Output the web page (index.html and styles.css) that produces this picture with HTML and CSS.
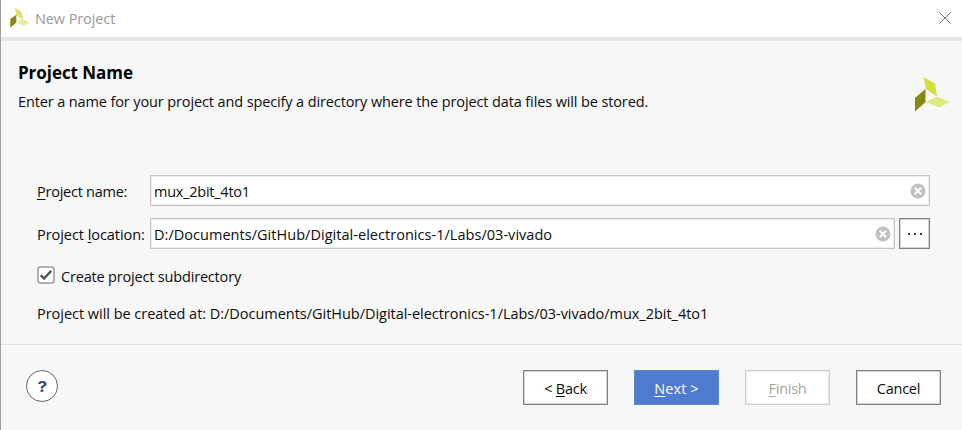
FILE: index.html
```html
<!DOCTYPE html>
<html lang="en">
<head>
<meta charset="utf-8">
<title>New Project</title>
<link rel="stylesheet" href="styles.css">
</head>
<body>
<div class="dialog">
  <header class="titlebar">
    <svg class="logo-small" viewBox="0 0 35 36"><path fill="#d9e36a" d="M8.500 0 20 6.500 23 22 11 13z"/><path fill="#878616" d="M0 20 11 12V26L0 35.500z"/><path fill="#e6eca0" d="M10 26 22 19.500 35 26 24 32.500z"/></svg>
    <span class="window-title">New Project</span>
    <svg class="close" viewBox="0 0 12 12"><path d="M.3.3 11.700 11.700M11.700.3.3 11.700"/></svg>
  </header>
  <section class="intro">
    <div>
      <h1>Project Name</h1>
      <p class="description">Enter a name for your project and specify a directory where the project data files will be stored.</p>
    </div>
    <svg class="logo" viewBox="0 0 35 36"><path fill="#d3e03c" d="M8.500 1 20 7.500 22 20.500 11 13z"/><path fill="#878812" d="M0 22 10.500 13V26L0 35.500z"/><path fill="#e0ea7c" d="M11 26 22 20.500 35 26 24 31.500z"/></svg>
  </section>
  <main class="form">
    <div class="row">
      <label class="name-label"><span><u>P</u>roject name:</span></label>
      <div class="field"><span class="name-value">mux_2bit_4to1</span><svg class="clear" viewBox="0 0 16 16"><circle cx="8" cy="8" r="7.500"/><path d="M4.800 4.800 11.200 11.200M11.200 4.800 4.800 11.200"/></svg></div>
    </div>
    <div class="row">
      <label class="location-label"><span>Project <u>l</u>ocation:</span></label>
      <div class="field"><span class="location-value">D:/Documents/GitHub/Digital-electronics-1/Labs/03-vivado</span><svg class="clear" viewBox="0 0 16 16"><circle cx="8" cy="8" r="7.500"/><path d="M4.800 4.800 11.200 11.200M11.200 4.800 4.800 11.200"/></svg></div>
      <button class="browse" aria-label="Browse"><i></i><i></i><i></i></button>
    </div>
    <div class="check-row">
      <svg class="checkbox" viewBox="0 0 18 18"><rect x="1" y="1" width="16" height="16" rx="2.500"/><path d="M3.800 9.200 7 12.500 14.200 4.800"/></svg>
      <span class="check-label">Create project subdirectory</span>
    </div>
    <p class="result">Project will be created at: D:/Documents/GitHub/Digital-electronics-1/Labs/03-vivado/mux_2bit_4to1</p>
  </main>
  <footer class="footer">
    <button class="help"><span>?</span></button>
    <div class="actions">
      <button class="btn back"><span>&lt; <u>B</u>ack</span></button>
      <button class="btn next"><span><u>N</u>ext &gt;</span></button>
      <button class="btn finish" disabled><span><u>F</u>inish</span></button>
      <button class="btn cancel"><span>Cancel</span></button>
    </div>
  </footer>
</div>
</body>
</html>
```
FILE: styles.css
```css
* { box-sizing: border-box; }
body {
  margin: 0;
  font: 14.5px/20px "Open Sans", "Noto Sans", sans-serif;
  letter-spacing: -0.25px;
  color: #0c0c0c;
}
.dialog {
  height: 430px;
  overflow: hidden;
  display: flex;
  flex-direction: column;
  background: #f7f7f7;
  border-left: 1px solid #a0a0a0;
  white-space: nowrap;
}
h1, p { margin: 0; }
u { text-decoration-thickness: 1px; text-underline-offset: 2px; text-decoration-skip-ink: none; }
button { font: inherit; letter-spacing: inherit; padding: 0; }

.titlebar {
  height: 41px;
  flex: none;
  display: flex;
  align-items: center;
  background: #fff;
  border-bottom: 4px solid #e6e6e6;
  padding: 0 11px 0 9px;
}
.logo-small { width: 20px; height: 20px; margin: -2px 5px 0 0; }
.window-title { flex: 1; color: #999; letter-spacing: -0.1px; }
.close { width: 12px; height: 12px; margin-top: -1px; fill: none; stroke: #777; stroke-width: 1; }

.intro {
  height: 134px;
  flex: none;
  display: flex;
  justify-content: space-between;
  padding: 20px 12px 0 17px;
}
h1 { font-size: 17px; line-height: 24px; font-weight: 700; letter-spacing: -0.05px; color: #000; }
.description { margin-top: 7px; letter-spacing: -0.12px; }
.logo { width: 35px; height: 36px; margin-top: 15px; }

.form { height: 169px; flex: none; padding: 0 32px 0 36px; }
.row { display: flex; height: 31px; margin-bottom: 12px; }
.row label { width: 113px; display: flex; align-items: center; padding-top: 2px; }
.location-label { letter-spacing: -0.05px; }
.field {
  flex: 1;
  display: flex;
  align-items: center;
  justify-content: space-between;
  background: #fff;
  border: 1px solid #c6c6c6;
  box-shadow: inset 0 0 0 1px #ededed;
  padding: 0 3px;
}
.field span { padding-top: 2px; }
.location-value { letter-spacing: 0.035px; }
.clear { width: 16px; height: 16px; }
.clear circle { fill: #c0c0c0; }
.clear path { stroke: #fff; stroke-width: 2; }
.browse {
  width: 31px;
  margin-left: 4px;
  display: flex;
  align-items: center;
  justify-content: center;
  gap: 4px;
  background: #fff;
  border: 1px solid #808080;
  box-shadow: inset 0 0 0 1px #d4d4d4;
}
.browse i { width: 2px; height: 2px; background: #333; }
.check-row { display: flex; align-items: center; height: 20px; margin-top: 18px; }
.checkbox { width: 18px; height: 18px; margin: -4px 6px 0 0; fill: none; }
.checkbox rect { fill: #fff; stroke: #999; stroke-width: 1.5; }
.checkbox path { stroke: #555; stroke-width: 2.5; }
.check-label { letter-spacing: -0.18px; }
.result { margin-top: 17px; letter-spacing: -0.03px; }

.footer {
  flex: 1;
  display: flex;
  justify-content: space-between;
  border-top: 1px solid #e0e0e0;
  padding: 25px 21px 0 25px;
}
.help {
  width: 32px;
  height: 32px;
  padding-top: 1px;
  border: 1px solid #666;
  border-radius: 50%;
  background: #fff;
  color: #34457a;
  font: 700 15px/28px Inter, sans-serif;
}
.help span { display: inline-block; transform: scaleX(1.15); }
.actions { display: flex; gap: 26px; }
.btn {
  width: 85px;
  height: 35px;
  padding-top: 2px;
  background: #fff;
  border: 1px solid #808080;
  box-shadow: inset 0 0 0 1px #d4d4d4;
  color: #0c0c0c;
}
.next { background: #4f7bcf; border-color: #5d86d3; box-shadow: none; color: #fff; letter-spacing: 0.1px; }
.finish { border-color: #ccc; box-shadow: inset 0 0 0 1px #ededed; color: #a5a5a5; }
```
